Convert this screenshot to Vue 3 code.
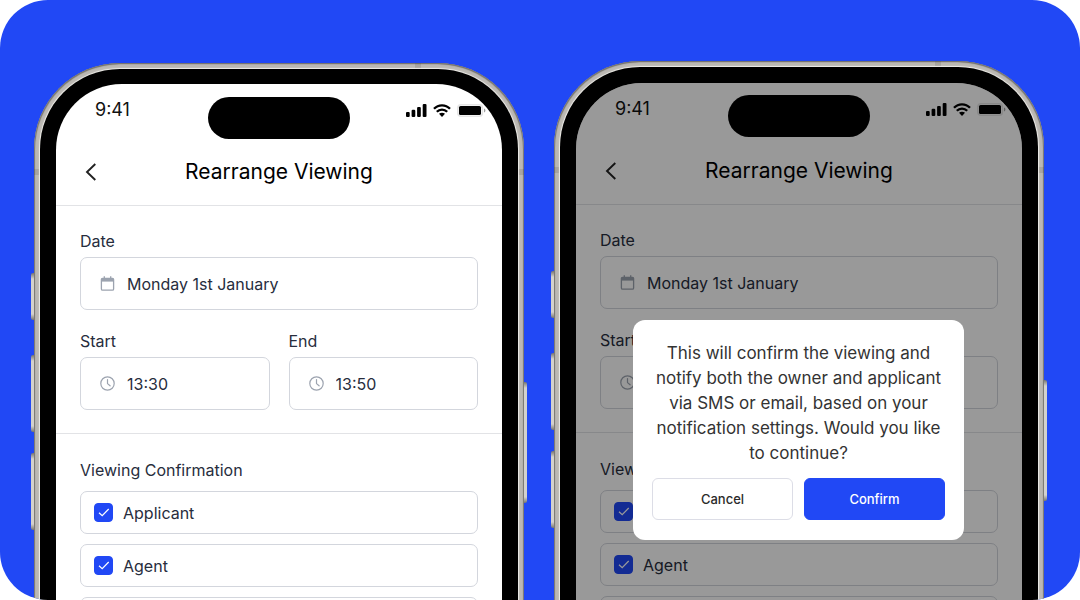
<script setup>
import { reactive } from 'vue'

const phones = reactive([
  { id: 'form', date: 'Monday 1st January', start: '13:30', end: '13:50', applicant: true, agent: true, confirming: false },
  { id: 'confirm', date: 'Monday 1st January', start: '13:30', end: '13:50', applicant: true, agent: true, confirming: true }
])
const recipients = [
  { key: 'applicant', label: 'Applicant' },
  { key: 'agent', label: 'Agent' }
]
</script>

<template>
  <main class="stage">
    <section v-for="p in phones" :key="p.id" class="phone" :class="{ raised: p.confirming }">
      <span class="key action"></span>
      <span class="key volume-up"></span>
      <span class="key volume-down"></span>
      <span class="key power"></span>
      <div class="frame">
        <span class="band band-top"></span>
        <span class="band band-left"></span>
        <span class="band band-right"></span>
        <div class="bezel">
          <div class="screen">
            <div class="status">
              <span class="time">9:41</span>
              <div class="indicators">
                <svg width="21" height="13" viewBox="0 0 21 13" aria-hidden="true">
                  <rect x="0" y="8" width="3.7" height="5" rx="1.1" />
                  <rect x="5.6" y="5.8" width="3.7" height="7.2" rx="1.1" />
                  <rect x="11.1" y="3" width="3.7" height="10" rx="1.1" />
                  <rect x="16.7" y="0" width="3.8" height="13" rx="1.1" />
                </svg>
                <svg width="18" height="13" viewBox="0 0 18 13" aria-hidden="true">
                  <g fill="none" stroke="#000" stroke-width="2.3">
                    <path d="M1 4.8C5.4 .1 12.6 .1 17 4.8" />
                    <path d="M3.8 7.8C6.7 4.9 11.3 4.9 14.2 7.8" />
                  </g>
                  <path d="M6 9.8C7.7 8.4 10.3 8.4 12 9.8L9 12.9Z" />
                </svg>
                <svg class="battery" width="29" height="13" viewBox="0 0 29 13" aria-hidden="true">
                  <rect x=".8" y=".8" width="24.6" height="11.4" rx="3.2" fill="none" stroke="#000" stroke-opacity=".1" stroke-width="1.6" />
                  <path d="M27.2 4.5C28.8 5.2 28.8 7.8 27.2 8.5Z" fill-opacity=".45" />
                  <rect x="2" y="2" width="22" height="9" rx="1.6" />
                </svg>
              </div>
            </div>

            <header class="header">
              <button class="back" type="button" aria-label="Back">
                <svg width="12" height="18" viewBox="0 0 12 18" aria-hidden="true">
                  <path d="M10.3 1L2 9L10.3 17" fill="none" stroke="#222" stroke-width="1.9" />
                </svg>
              </button>
              <h1>Rearrange Viewing</h1>
            </header>

            <div class="times">
              <div class="field">
                <label :for="p.id + '-date'">Date</label>
                <div class="control">
                  <svg width="14" height="15" viewBox="0 0 14 15" aria-hidden="true">
                    <g fill="none" stroke="#9ca3af" stroke-width="1.3">
                      <rect x=".9" y="2.4" width="12.2" height="11.7" rx="1.2" />
                      <path d="M3.8 .2V3M10.2 .2V3" />
                    </g>
                    <path d="M1 2.4H13V5.6H1Z" fill="#9ca3af" />
                  </svg>
                  <input :id="p.id + '-date'" v-model="p.date" type="text" />
                </div>
              </div>
              <div class="pair">
                <div v-for="edge in ['start', 'end']" :key="edge" class="field">
                  <label :for="p.id + '-' + edge">{{ edge === 'start' ? 'Start' : 'End' }}</label>
                  <div class="control">
                    <svg width="15" height="15" viewBox="0 0 15 15" aria-hidden="true">
                      <g fill="none" stroke="#9ca3af" stroke-width="1.2" stroke-linecap="round" stroke-linejoin="round">
                        <circle cx="7.5" cy="7.5" r="6.7" />
                        <path d="M7.5 3.5V7.6L10.1 9.8" />
                      </g>
                    </svg>
                    <input :id="p.id + '-' + edge" v-model="p[edge]" type="text" />
                  </div>
                </div>
              </div>
            </div>

            <div class="confirmation">
              <h2>Viewing Confirmation</h2>
              <label v-for="r in recipients" :key="r.key" class="option">
                <span class="tick">
                  <input v-model="p[r.key]" type="checkbox" />
                  <svg v-if="p[r.key]" width="12" height="9" viewBox="0 0 12 9" aria-hidden="true">
                    <path d="M1 4.8L4.2 7.7L10.7 1" fill="none" stroke="#fff" stroke-width="1.2" />
                  </svg>
                </span>
                {{ r.label }}
              </label>
              <div class="option"></div>
            </div>

            <div v-if="p.confirming" class="scrim">
              <div class="dialog" role="dialog" aria-describedby="dialog-text">
                <p id="dialog-text">This will confirm the viewing and notify both the owner and applicant via SMS or email, based on your notification settings. Would you like to continue?</p>
                <div class="actions">
                  <button type="button" class="cancel">Cancel</button>
                  <button type="button" class="confirm">Confirm</button>
                </div>
              </div>
            </div>
          </div>
        </div>
      </div>
      <span class="island"></span>
    </section>
  </main>
</template>

<style>
html, body { background: #fff; }
</style>

<style scoped>
* { box-sizing: border-box; }

.stage {
  display: flex;
  gap: 30px;
  height: 100vh;
  padding: 0 36px 0 34px;
  overflow: hidden;
  border-radius: 48px;
  background: #2148f5;
  font-family: Inter, "Liberation Sans", sans-serif;
  color: #272d3d;
}

.phone {
  position: relative;
  flex: 1;
  min-width: 0;
  display: flex;
  margin-top: 63px;
}
.phone.raised { margin-top: 61px; }

.frame {
  position: relative;
  flex: 1;
  min-width: 0;
  display: flex;
  padding: 6px 6px 0;
  border-radius: 86px 86px 0 0;
  background: #bbb8b3;
  box-shadow: inset 1px 1px 1px #77756f, inset -1px 1px 1px #77756f;
}

.bezel {
  position: relative;
  flex: 1;
  min-width: 0;
  display: flex;
  padding: 15px 16px 0;
  border-radius: 80px 80px 0 0;
  background: #000;
  box-shadow: 0 0 1px 1px #efeeea;
}
.raised .bezel { padding-top: 16px; }

.screen {
  position: relative;
  flex: 1;
  min-width: 0;
  overflow: hidden;
  border-radius: 66px 66px 0 0;
  background: #fff;
}

.band { position: absolute; background: rgba(60, 58, 54, .15); }
.band-top { top: 0; right: 103px; width: 6px; height: 6px; }
.band-left { top: 106px; left: 0; width: 6px; height: 6px; }
.band-right { top: 106px; right: 0; width: 6px; height: 6px; }

.key {
  position: absolute;
  left: -3px;
  width: 4px;
  border-radius: 2px 0 0 2px;
  background: linear-gradient(#77756f, #d3d1cd 6px, #d3d1cd calc(100% - 6px), #77756f);
}
.action { top: 210px; height: 47px; }
.volume-up { top: 292px; height: 77px; }
.volume-down { top: 390px; height: 77px; }
.power { top: 319px; left: auto; right: -3px; height: 121px; border-radius: 0 2px 2px 0; }

.island {
  position: absolute;
  top: 34px;
  left: 50%;
  width: 142px;
  height: 42px;
  margin-left: -71px;
  border-radius: 21px;
  background: #000;
}

.status {
  display: flex;
  justify-content: space-between;
  align-items: center;
  height: 52px;
  padding: 0 16px 0 39px;
}
.time { font-size: 18px; line-height: 24px; color: #111; }
.indicators { display: flex; align-items: center; gap: 6px; }

.header {
  display: flex;
  align-items: center;
  justify-content: center;
  position: relative;
  height: 70px;
  padding-top: 2px;
  border-bottom: 1px solid #e2e3e6;
}
.header h1 { margin: 0; font-size: 21px; line-height: 28px; font-weight: 400; color: #000; }
.back {
  position: absolute;
  left: 23px;
  display: grid;
  place-items: center;
  width: 24px;
  height: 28px;
  padding: 0;
  border: 0;
  background: none;
}

.times {
  display: grid;
  gap: 19px;
  padding: 23px 24px;
  border-bottom: 1px solid #e2e3e6;
}
.pair { display: grid; grid-template-columns: 1fr 1fr; gap: 19px; }
.field { display: grid; grid-template-columns: minmax(0, 1fr); gap: 4px; min-width: 0; }
.field label, .confirmation h2 { font-size: 16px; line-height: 24px; font-weight: 400; }
.control {
  display: flex;
  align-items: center;
  gap: 12px;
  height: 53px;
  padding: 0 19px;
  border: 1px solid #d3d6dd;
  border-radius: 7px;
}
.control svg { flex: none; width: 15px; }
.control input {
  flex: 1;
  min-width: 0;
  height: 28px;
  padding: 0;
  border: 0;
  outline: 0;
  background: none;
  font: 400 16px/24px Inter, "Liberation Sans", sans-serif;
  color: #272d3d;
}

.confirmation { display: grid; gap: 10px; padding: 25px 24px; }
.confirmation h2 { margin: 0; line-height: 22px; }
.option {
  display: flex;
  align-items: center;
  gap: 10px;
  height: 43px;
  padding: 0 13px;
  border: 1px solid #d3d6dd;
  border-radius: 7px;
  font-size: 16px;
  line-height: 24px;
}
.tick { display: grid; place-items: center; }
.tick > * { grid-area: 1 / 1; }
.tick svg { pointer-events: none; }
.tick input {
  appearance: none;
  width: 19px;
  height: 19px;
  margin: 0;
  border: 1px solid #d3d6dd;
  border-radius: 4px;
}
.tick input:checked { border-color: #2148f5; background: #2148f5; }

.scrim { position: absolute; inset: 0; padding: 237px 58px 0 57px; background: rgba(0, 0, 0, .4); }
.dialog { padding: 21px 19px 20px; border-radius: 12px; background: #fff; }
.dialog p { margin: 0; font-size: 17px; line-height: 25px; text-align: center; color: #333; }
.actions { display: grid; grid-template-columns: 1fr 1fr; gap: 11px; margin-top: 12px; }
.actions button {
  height: 42px;
  padding: 0;
  border: 1px solid #dcdde6;
  border-radius: 6px;
  background: #fff;
  font: 500 13px/20px Inter, "Liberation Sans", sans-serif;
  color: #2a2a2a;
}
.actions .confirm { border-color: #2148f5; background: #2148f5; color: #fff; }
</style>
